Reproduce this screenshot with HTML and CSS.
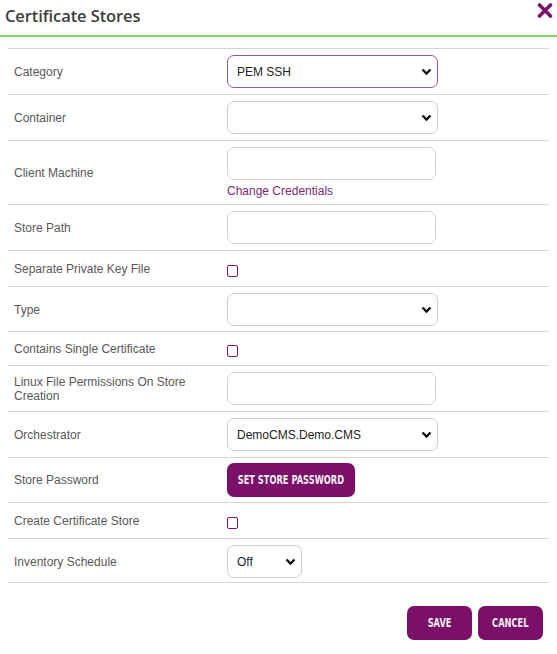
FILE: index.html
```html
<!DOCTYPE html>
<html>
<head>
<meta charset="utf-8">
<link rel="stylesheet" href="styles.css">
</head>
<body>
<div class="dialog">
  <header class="head">
    <h1 class="title">Certificate Stores</h1>
    <svg class="close" width="16" height="15" viewBox="0 0 16 15"><path d="M2.5 2 L13.5 13 M13.5 2 L2.5 13" stroke="#7b1468" stroke-width="3.6" stroke-linecap="round"/></svg>
  </header>
  <div class="form">
    <div class="row">
      <div class="lbl">Category</div>
      <div class="ctl"><div class="sel focus"><span>PEM SSH</span><svg class="chev" width="11" height="8" viewBox="0 0 11 8"><path d="M1.5 1.5 L5.5 5.5 L9.5 1.5" fill="none" stroke="#111" stroke-width="2.4"/></svg></div></div>
    </div>
    <div class="row">
      <div class="lbl">Container</div>
      <div class="ctl"><div class="sel"><span></span><svg class="chev" width="11" height="8" viewBox="0 0 11 8"><path d="M1.5 1.5 L5.5 5.5 L9.5 1.5" fill="none" stroke="#111" stroke-width="2.4"/></svg></div></div>
    </div>
    <div class="row">
      <div class="lbl">Client Machine</div>
      <div class="ctl"><input class="inp" type="text"><a class="link">Change Credentials</a></div>
    </div>
    <div class="row">
      <div class="lbl">Store Path</div>
      <div class="ctl"><input class="inp" type="text"></div>
    </div>
    <div class="row chk-row">
      <div class="lbl">Separate Private Key File</div>
      <div class="ctl"><span class="chk"></span></div>
    </div>
    <div class="row tight">
      <div class="lbl">Type</div>
      <div class="ctl"><div class="sel"><span></span><svg class="chev" width="11" height="8" viewBox="0 0 11 8"><path d="M1.5 1.5 L5.5 5.5 L9.5 1.5" fill="none" stroke="#111" stroke-width="2.4"/></svg></div></div>
    </div>
    <div class="row chk-row short">
      <div class="lbl">Contains Single Certificate</div>
      <div class="ctl"><span class="chk"></span></div>
    </div>
    <div class="row">
      <div class="lbl">Linux File Permissions On Store<br>Creation</div>
      <div class="ctl"><input class="inp" type="text"></div>
    </div>
    <div class="row">
      <div class="lbl">Orchestrator</div>
      <div class="ctl"><div class="sel"><span>DemoCMS.Demo.CMS</span><svg class="chev" width="11" height="8" viewBox="0 0 11 8"><path d="M1.5 1.5 L5.5 5.5 L9.5 1.5" fill="none" stroke="#111" stroke-width="2.4"/></svg></div></div>
    </div>
    <div class="row btn-row">
      <div class="lbl">Store Password</div>
      <div class="ctl"><button class="btn wide"><span class="cond">SET STORE PASSWORD</span></button></div>
    </div>
    <div class="row chk-row">
      <div class="lbl">Create Certificate Store</div>
      <div class="ctl"><span class="chk"></span></div>
    </div>
    <div class="row last">
      <div class="lbl">Inventory Schedule</div>
      <div class="ctl"><div class="sel small"><span>Off</span><svg class="chev" width="11" height="8" viewBox="0 0 11 8"><path d="M1.5 1.5 L5.5 5.5 L9.5 1.5" fill="none" stroke="#111" stroke-width="2.4"/></svg></div></div>
    </div>
  </div>
  <div class="actions">
    <button class="btn act"><span class="cond">SAVE</span></button>
    <button class="btn act"><span class="cond">CANCEL</span></button>
  </div>
</div>
</body>
</html>
```
FILE: styles.css
```css
html, body {
  margin: 0;
  padding: 0;
  background: #fff;
}
body {
  font-family: "Liberation Sans", Arial, sans-serif;
  color: #555;
}
.dialog {
  width: 557px;
}
.head {
  display: flex;
  justify-content: space-between;
  align-items: flex-start;
  border-bottom: 2px solid #7fd46c;
  box-sizing: border-box;
  height: 37px;
}
.title {
  margin: 0;
  padding: 4px 0 0 5px;
  font-family: "Open Sans", sans-serif;
  font-size: 16.5px;
  font-weight: 600;
  color: #3d3d3d;
  letter-spacing: -0.1px;
}
.close {
  margin: 3px 4px 0 0;
}
.form {
  margin: 11px 8px 0 8px;
}
.row {
  display: grid;
  grid-template-columns: 219px 1fr;
  align-items: center;
  border-top: 1px solid #d6d6d6;
  padding: 6px 0;
  min-height: 33px;
}
.row.tight {
  padding-bottom: 5px;
}
.row.btn-row {
  padding: 4px 0 5px 0;
  min-height: 35px;
}
.row.last {
  border-bottom: 1px solid #d6d6d6;
  padding-bottom: 4px;
}
.chk-row {
  min-height: 23px;
}
.chk-row.short {
  min-height: 21px;
}
.lbl {
  padding-left: 6px;
  font-size: 12px;
  line-height: 14px;
  color: #585858;
}
.ctl {
  display: flex;
  flex-direction: column;
  align-items: flex-start;
}
.sel {
  box-sizing: border-box;
  width: 211px;
  height: 33px;
  border: 1px solid #cfcfcf;
  border-radius: 7px;
  display: flex;
  align-items: center;
  justify-content: space-between;
  padding: 0 5px 0 9px;
  font-size: 12px;
  color: #222;
}
.sel.focus {
  border-color: #9c5592;
}
.sel.small {
  width: 75px;
}
.inp {
  box-sizing: border-box;
  width: 209px;
  height: 33px;
  border: 1px solid #d2d2d2;
  border-radius: 7px;
  margin: 0;
  padding: 0 8px;
  font: inherit;
}
.link {
  margin-top: 4px;
  font-size: 12px;
  line-height: 14px;
  color: #7a2a6e;
}
.chk {
  box-sizing: border-box;
  width: 11px;
  height: 12px;
  border: 1.5px solid #7b1468;
  border-radius: 2px;
  margin-top: 5px;
  background: #fff;
}
.btn {
  box-sizing: border-box;
  height: 34px;
  border: 0;
  border-radius: 7px;
  background: #7b1068;
  color: #f4eef3;
  font-family: "DejaVu Sans", sans-serif;
  font-weight: 700;
  font-size: 11.5px;
  padding: 0;
  display: flex;
  align-items: center;
  justify-content: center;
  white-space: nowrap;
}
.cond {
  display: inline-block;
  transform: scaleX(0.72);
}
.btn.wide {
  width: 128px;
  margin-top: 1px;
}
.actions {
  display: flex;
  justify-content: flex-end;
  gap: 6px;
  padding: 23px 14px 0 0;
}
.btn.act {
  width: 65px;
  height: 34px;
}
```
